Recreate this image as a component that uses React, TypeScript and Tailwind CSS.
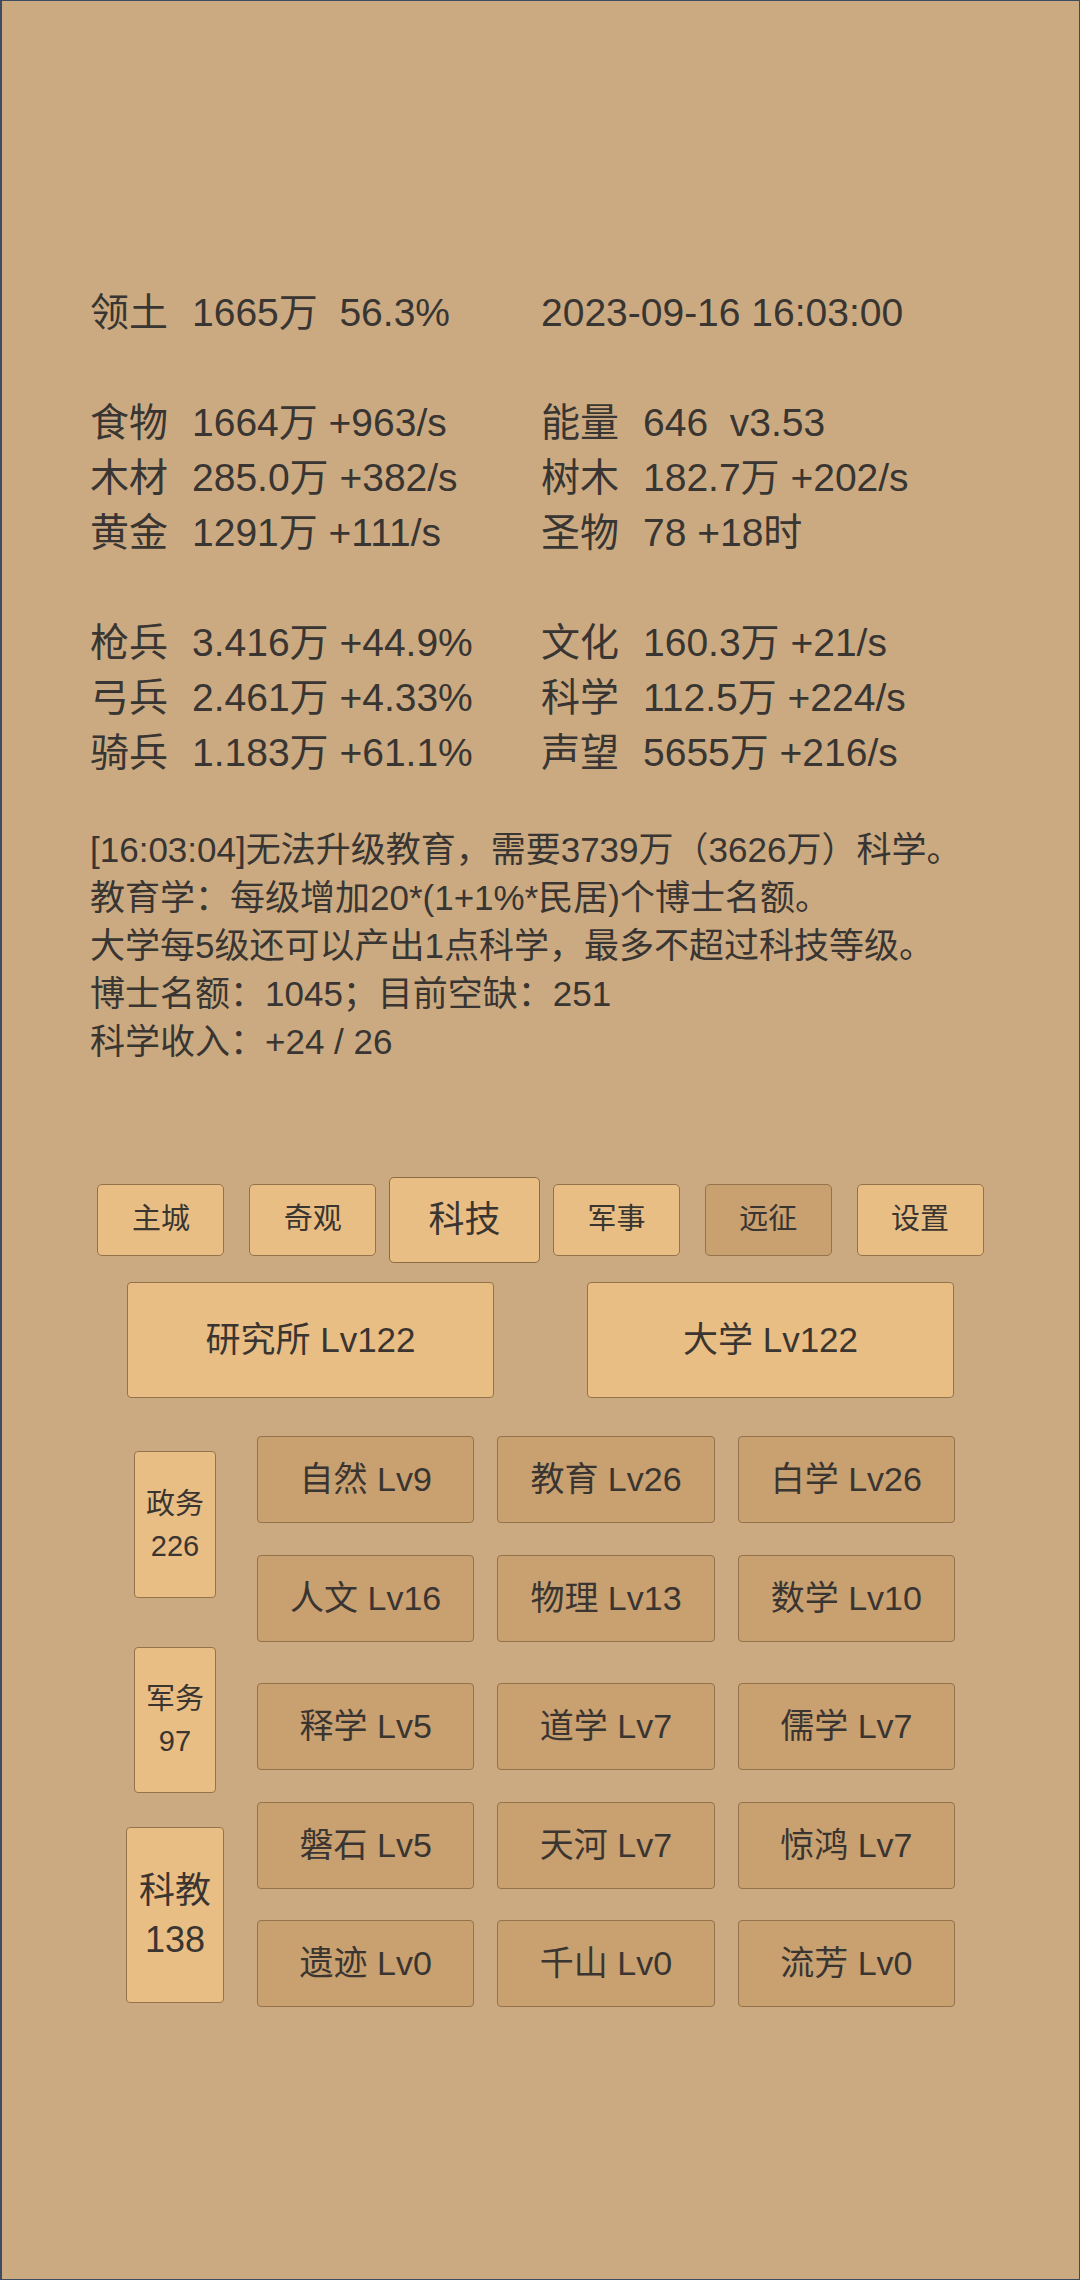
import React from 'react';

type Stat = { label?: string; value: string };

const statRows: ([Stat, Stat] | null)[] = [
  [{ label: '领土', value: '1665万  56.3%' }, { value: '2023-09-16 16:03:00' }],
  null,
  [{ label: '食物', value: '1664万 +963/s' }, { label: '能量', value: '646  v3.53' }],
  [{ label: '木材', value: '285.0万 +382/s' }, { label: '树木', value: '182.7万 +202/s' }],
  [{ label: '黄金', value: '1291万 +111/s' }, { label: '圣物', value: '78 +18时' }],
  null,
  [{ label: '枪兵', value: '3.416万 +44.9%' }, { label: '文化', value: '160.3万 +21/s' }],
  [{ label: '弓兵', value: '2.461万 +4.33%' }, { label: '科学', value: '112.5万 +224/s' }],
  [{ label: '骑兵', value: '1.183万 +61.1%' }, { label: '声望', value: '5655万 +216/s' }],
];

const logLines = [
  '[16:03:04]无法升级教育，需要3739万（3626万）科学。',
  '教育学：每级增加20*(1+1%*民居)个博士名额。',
  '大学每5级还可以产出1点科学，最多不超过科技等级。',
  '博士名额：1045；目前空缺：251',
  '科学收入：+24 / 26',
];

const tabs = [
  { label: '主城' },
  { label: '奇观' },
  { label: '科技', active: true },
  { label: '军事' },
  { label: '远征', dark: true },
  { label: '设置' },
];

const techRows = [
  { gap: '', items: ['自然 Lv9', '教育 Lv26', '白学 Lv26'] },
  { gap: 'mt-[32px]', items: ['人文 Lv16', '物理 Lv13', '数学 Lv10'] },
  { gap: 'mt-[41px]', items: ['释学 Lv5', '道学 Lv7', '儒学 Lv7'] },
  { gap: 'mt-[32px]', items: ['磐石 Lv5', '天河 Lv7', '惊鸿 Lv7'] },
  { gap: 'mt-[31px]', items: ['遗迹 Lv0', '千山 Lv0', '流芳 Lv0'] },
];

const StatCell: React.FC<{ stat: Stat }> = ({ stat }) => (
  <div className="flex whitespace-pre">
    {stat.label && <span className="w-[102px] shrink-0">{stat.label}</span>}
    <span>{stat.value}</span>
  </div>
);

const TechButton: React.FC<{ label: string }> = ({ label }) => (
  <button className="h-[87px] rounded-[4px] border border-[#94724c] bg-[#c9a070] text-[34px] text-[#3a3530] flex items-center justify-center whitespace-pre">
    {label}
  </button>
);

export default function App() {
  return (
    <div className="w-[1080px] h-[2280px] bg-[#cbaa81] border border-l-2 border-[#3e4a5e] text-[#383532] font-['Liberation_Sans','Noto_Sans_CJK_SC',sans-serif] overflow-hidden">
      {/* Resources */}
      <div className="pt-[284px] pl-[88px] text-[39px] leading-[55px]">
        {statRows.map((row, i) =>
          row ? (
            <div key={i} className="grid grid-cols-[451px_1fr]">
              <StatCell stat={row[0]} />
              <StatCell stat={row[1]} />
            </div>
          ) : (
            <div key={i} className="h-[55px]" />
          )
        )}
      </div>

      {/* Log */}
      <div className="mt-[46px] pl-[88px] text-[35px] leading-[48px] whitespace-nowrap">
        {logLines.map((line, i) => (
          <div key={i}>{line}</div>
        ))}
      </div>

      {/* Tabs */}
      <div className="mt-[111px] mx-[83px] grid grid-cols-6 items-center h-[86px]">
        {tabs.map((t) => (
          <div key={t.label} className="flex justify-center">
            <button
              className={
                t.active
                  ? 'w-[152px] h-[86px] rounded-[5px] border border-[#8c6a44] bg-[#e9be85] text-[36px] text-[#3a3530]'
                  : t.dark
                  ? 'w-[127px] h-[72px] rounded-[5px] border border-[#94724c] bg-[#c9a070] text-[29px] text-[#3a3530]'
                  : 'w-[127px] h-[72px] rounded-[5px] border border-[#94724c] bg-[#e9be85] text-[29px] text-[#3a3530]'
              }
            >
              {t.label}
            </button>
          </div>
        ))}
      </div>

      {/* Buildings */}
      <div className="mt-[19px] flex justify-center gap-[93px]">
        <button className="w-[367px] h-[116px] rounded-[4px] border border-[#94724c] bg-[#e9be85] text-[35px] text-[#3a3530]">
          研究所 Lv122
        </button>
        <button className="w-[367px] h-[116px] rounded-[4px] border border-[#94724c] bg-[#e9be85] text-[35px] text-[#3a3530]">
          大学 Lv122
        </button>
      </div>

      {/* Tech tree */}
      <div className="mt-[38px] flex pl-[124px]">
        <div className="w-[98px] flex flex-col items-center">
          <div className="mt-[15px] w-[82px] h-[147px] rounded-[4px] border border-[#94724c] bg-[#e9be85] text-[29px] leading-[42px] text-[#3a3530] flex flex-col items-center justify-center">
            <span>政务</span>
            <span>226</span>
          </div>
          <div className="mt-[49px] w-[82px] h-[146px] rounded-[4px] border border-[#94724c] bg-[#e9be85] text-[29px] leading-[42px] text-[#3a3530] flex flex-col items-center justify-center">
            <span>军务</span>
            <span>97</span>
          </div>
          <div className="mt-[34px] w-[98px] h-[176px] rounded-[4px] border border-[#94724c] bg-[#e9be85] text-[36px] leading-[49px] text-[#3a3530] flex flex-col items-center justify-center">
            <span>科教</span>
            <span>138</span>
          </div>
        </div>

        <div className="ml-[33px] w-[698px] flex flex-col">
          {techRows.map((row, i) => (
            <div key={i} className={`${row.gap} grid grid-cols-3 gap-x-[23px]`}>
              {row.items.map((label) => (
                <TechButton key={label} label={label} />
              ))}
            </div>
          ))}
        </div>
      </div>
    </div>
  );
}
